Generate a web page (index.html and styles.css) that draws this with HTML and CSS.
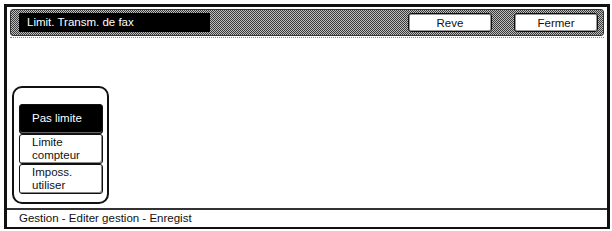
FILE: index.html
```html
<!DOCTYPE html>
<html lang="fr">
<head>
    <meta charset="UTF-8">
    <meta name="viewport" content="width=device-width, initial-scale=1.0">
    <title>Limit. Transm. de fax</title>
    <link rel="stylesheet" href="styles.css">
</head>
<body>
    <div class="screen">
        <div class="title-bar">
            <div class="title">Limit. Transm. de fax</div>
            <div class="title-buttons">
                <button class="bar-button">Reve</button>
                <button class="bar-button">Fermer</button>
            </div>
        </div>
        <div class="separator"></div>
        <div class="content">
            <div class="option-group">
                <button class="option selected">Pas limite</button>
                <button class="option">Limite<br>compteur</button>
                <button class="option">Imposs.<br>utiliser</button>
            </div>
        </div>
        <div class="footer">Gestion - Editer gestion - Enregist</div>
    </div>
</body>
</html>
```

FILE: styles.css
```css
body {
    margin: 0;
    background: #fff;
    font-family: "Liberation Sans", Arial, sans-serif;
    font-size: 11.5px;
    color: #111;
}

.screen {
    box-sizing: border-box;
    width: 606px;
    height: 225px;
    margin: 4px 0 0 4px;
    border: 3px solid #111;
    border-bottom-width: 2px;
    padding: 2px 3px 0 3px;
    display: flex;
    flex-direction: column;
    background: #fff;
}

.title-bar {
    box-sizing: border-box;
    height: 27px;
    border: 1px solid #333;
    border-radius: 3px;
    padding: 3px 5px 0 8px;
    display: flex;
    justify-content: space-between;
    align-items: flex-start;
    background: repeating-conic-gradient(#3a3a3a 0 25%, #bdbdbd 0 50%) 0 0 / 2px 2px;
}

.title {
    box-sizing: border-box;
    width: 191px;
    height: 19px;
    background: #000;
    color: #fff;
    padding-left: 8px;
    line-height: 19px;
}

.title-buttons {
    display: flex;
    gap: 22px;
}

.bar-button {
    box-sizing: border-box;
    width: 84px;
    height: 19px;
    background: #fff;
    border: 1px solid #111;
    border-radius: 3px;
    box-shadow: inset 0 0 0 1px #999;
    font-family: inherit;
    font-size: 11.5px;
    color: #111;
    padding: 0;
}

.separator {
    margin-top: 1px;
    border-top: 1px dotted #888;
}

.content {
    flex: 1;
    padding: 48px 0 0 2px;
}

.option-group {
    box-sizing: border-box;
    width: 97px;
    height: 118px;
    border: 2px solid #111;
    border-radius: 10px;
    padding: 16px 0 0 5px;
    display: flex;
    flex-direction: column;
}

.option {
    box-sizing: border-box;
    width: 84px;
    height: 30px;
    background: #fff;
    border: 1px solid #111;
    border-radius: 3px;
    box-shadow: inset -1px -1px 0 #888;
    font-family: inherit;
    font-size: 11.5px;
    line-height: 13px;
    color: #111;
    text-align: left;
    padding: 0 0 1px 12px;
}

.option.selected {
    background: #000;
    color: #fff;
    box-shadow: inset 0 -1px 0 #666;
}

.footer {
    box-sizing: border-box;
    height: 19px;
    margin: 0 -3px;
    border-top: 2px solid #333;
    padding-left: 12px;
    line-height: 17px;
}
```
